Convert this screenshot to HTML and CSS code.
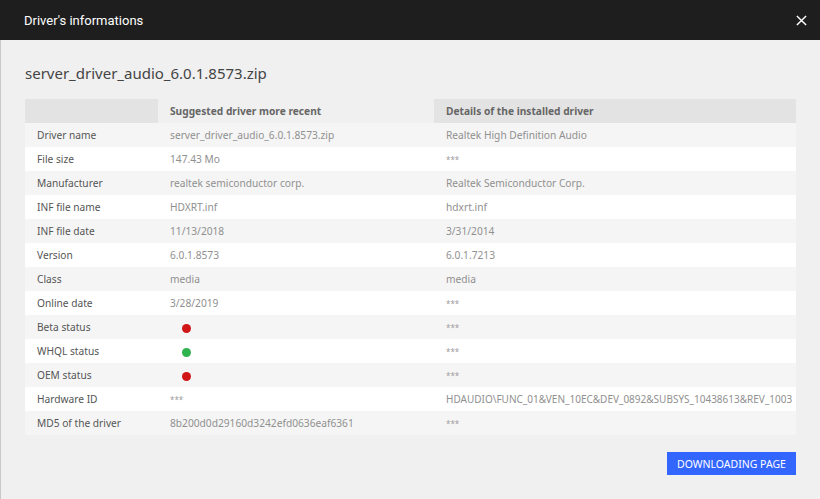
FILE: index.html
```html
<!DOCTYPE html>
<html lang="en">
  <head>
    <meta charset="UTF-8" />
    <meta name="viewport" content="width=device-width, initial-scale=1.0" />
    <title>Driver's informations</title>
    <link rel="stylesheet" href="styles.css">
  </head>
  <body>
    <div class="modal">
      <div class="modal__header">
        <span class="modal__title">Driver's informations</span>
        <span class="modal__close">
          <svg width="11" height="11" viewBox="0 0 12 12" fill="none" xmlns="http://www.w3.org/2000/svg">
            <path d="M1 1L11 11M11 1L1 11" stroke="#ffffff" stroke-width="1.6" />
          </svg>
        </span>
      </div>

      <div class="modal__body">
        <h2 class="driver-title">server_driver_audio_6.0.1.8573.zip</h2>

        <table class="driver-table">
          <colgroup>
            <col class="col-label" />
            <col class="col-suggested" />
            <col class="col-installed" />
          </colgroup>
          <thead>
            <tr>
              <th class="th-empty"></th>
              <th class="th-light">Suggested driver more recent</th>
              <th>Details of the installed driver</th>
            </tr>
          </thead>
          <tbody>
            <tr>
              <td>Driver name</td>
              <td>server_driver_audio_6.0.1.8573.zip</td>
              <td>Realtek High Definition Audio</td>
            </tr>
            <tr>
              <td>File size</td>
              <td>147.43 Mo</td>
              <td class="stars">***</td>
            </tr>
            <tr>
              <td>Manufacturer</td>
              <td>realtek semiconductor corp.</td>
              <td>Realtek Semiconductor Corp.</td>
            </tr>
            <tr>
              <td>INF file name</td>
              <td>HDXRT.inf</td>
              <td>hdxrt.inf</td>
            </tr>
            <tr>
              <td>INF file date</td>
              <td>11/13/2018</td>
              <td>3/31/2014</td>
            </tr>
            <tr>
              <td>Version</td>
              <td>6.0.1.8573</td>
              <td>6.0.1.7213</td>
            </tr>
            <tr>
              <td>Class</td>
              <td>media</td>
              <td>media</td>
            </tr>
            <tr>
              <td>Online date</td>
              <td>3/28/2019</td>
              <td class="stars">***</td>
            </tr>
            <tr>
              <td>Beta status</td>
              <td><span class="status-dot status-dot--red"></span></td>
              <td class="stars">***</td>
            </tr>
            <tr>
              <td>WHQL status</td>
              <td><span class="status-dot status-dot--green"></span></td>
              <td class="stars">***</td>
            </tr>
            <tr>
              <td>OEM status</td>
              <td><span class="status-dot status-dot--red"></span></td>
              <td class="stars">***</td>
            </tr>
            <tr>
              <td>Hardware ID</td>
              <td class="stars">***</td>
              <td class="hwid">HDAUDIO\FUNC_01&amp;VEN_10EC&amp;DEV_0892&amp;SUBSYS_10438613&amp;REV_1003</td>
            </tr>
            <tr>
              <td>MD5 of the driver</td>
              <td>8b200d0d29160d3242efd0636eaf6361</td>
              <td class="stars">***</td>
            </tr>
          </tbody>
        </table>

        <div class="modal__actions">
          <a class="btn-download" href="#">DOWNLOADING PAGE</a>
        </div>
      </div>
    </div>
  </body>
</html>
```

FILE: styles.css
```css
* {
  box-sizing: border-box;
}

body {
  margin: 0;
  font-family: "Noto Sans", "Open Sans", sans-serif;
  background-color: #f0f0f0;
}

.modal {
  width: 820px;
  height: 499px;
  display: flex;
  flex-direction: column;
}

.modal__header {
  height: 40px;
  flex-shrink: 0;
  display: flex;
  align-items: center;
  justify-content: space-between;
  padding: 0 13px 0 24px;
  background-color: #1e1e1e;
}

.modal__title {
  font-family: Roboto, sans-serif;
  font-size: 13px;
  color: #ffffff;
}

.modal__close {
  display: flex;
  width: 11px;
  height: 11px;
  cursor: pointer;
}

.modal__body {
  flex: 1;
  padding: 0 24px 0 23px;
  border-left: 1px solid #c8c8c8;
  background-color: #f0f0f0;
}

.driver-title {
  margin: 0;
  padding: 23px 0 16px 1px;
  font-size: 15px;
  font-weight: 400;
  line-height: 20px;
  color: #444444;
}

.driver-table {
  width: 771px;
  margin-left: 1px;
  border-collapse: collapse;
  table-layout: fixed;
  font-size: 10.2px;
  color: #909090;
}

.col-label {
  width: 133px;
}

.col-suggested {
  width: 276px;
}

.col-installed {
  width: 362px;
}

.driver-table th,
.driver-table td {
  height: 24px;
  padding: 0 12px;
  text-align: left;
  white-space: nowrap;
  overflow: hidden;
}

.driver-table th {
  font-weight: 700;
  color: #666666;
  background-color: #e3e3e3;
}

.driver-table th.th-light {
  background-color: #f0f0f0;
}

.driver-table td:first-child {
  color: #555555;
}

.driver-table td.stars {
  font-size: 8px;
  color: #a0a0a0;
}

.driver-table td.hwid {
  padding-right: 0;
  font-size: 10px;
}

.driver-table tbody tr:nth-child(odd) {
  background-color: #f5f5f5;
}

.driver-table tbody tr:nth-child(even) {
  background-color: #ffffff;
}

.status-dot {
  display: inline-block;
  width: 9px;
  height: 9px;
  margin-left: 12px;
  vertical-align: middle;
  border-radius: 50%;
}

.status-dot--red {
  background-color: #d01616;
}

.status-dot--green {
  background-color: #2fb34f;
}

.modal__actions {
  display: flex;
  justify-content: flex-end;
  padding-top: 17px;
}

.btn-download {
  display: inline-flex;
  align-items: center;
  justify-content: center;
  width: 129px;
  height: 23px;
  font-size: 10.5px;
  color: #ffffff;
  text-decoration: none;
  background-color: #3366ff;
}
```
